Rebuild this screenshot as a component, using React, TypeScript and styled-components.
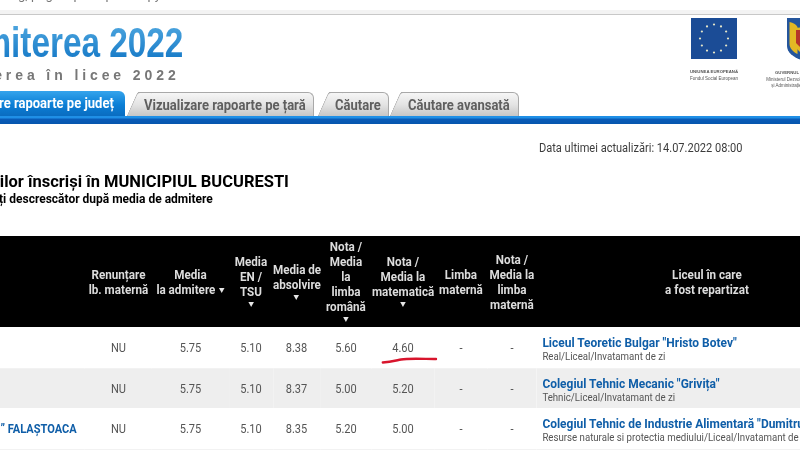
import React from "react";
import styled, { createGlobalStyle } from "styled-components";

const Global = createGlobalStyle`
  html, body { margin: 0; padding: 0; background: #fff; overflow: hidden; width: 800px; height: 450px; }
  body { font-family: Roboto, "DejaVu Sans", sans-serif; }
`;

const SHIFT = 200;
const SQUEEZE = 0.92;

const Viewport = styled.div`
  width: 800px;
  height: 450px;
  overflow: hidden;
  filter: blur(0.35px);
`;
const Page = styled.div`
  width: 1200px;
  margin-left: -${SHIFT}px;
`;
const BrowserText = styled.div`
  height: 3px;
  overflow: hidden;
  font-size: 13px;
  line-height: 13px;
  color: #777;
  padding-left: 218px;
`;
const BrowserLine = styled.div`
  margin-top: -12px;
  white-space: nowrap;
`;
const TopBand = styled.div`
  margin-top: 7px;
  height: 4px;
  background: #f3f3f3;
  border-bottom: 1px solid #c8c8c8;
`;
const Masthead = styled.header`
  height: 76px;
  position: relative;
`;
const Brand = styled.div`
  padding: 4px 0 0 137px;
`;
const BrandTitle = styled.div`
  font-family: "Liberation Sans", sans-serif;
  font-weight: 700;
  font-size: 43px;
  line-height: 46px;
  width: max-content;
  transform: scaleX(0.775);
  transform-origin: left top;
  background: linear-gradient(#55ace2, #0f74c4);
  -webkit-background-clip: text;
  background-clip: text;
  color: transparent;
`;
const BrandSub = styled.div`
  font-family: "Liberation Sans", sans-serif;
  font-weight: 700;
  font-size: 14px;
  line-height: 16px;
  margin-top: 2px;
  margin-left: -4px;
  letter-spacing: 3.9px;
  color: #777;
  white-space: nowrap;
  padding-left: 2px;
`;
const Partners = styled.div`
  display: flex;
  gap: 13px;
  padding: 3px 0 0 884px;
  position: absolute;
  left: 0;
  top: 0;
`;
const Partner = styled.div`
  width: 60px;
  display: flex;
  flex-direction: column;
  align-items: center;
  font-family: "Liberation Sans", sans-serif;
  font-size: 4.5px;
  line-height: 6.5px;
  color: #555;
  white-space: nowrap;
  text-align: center;
  b { font-size: 4.3px; }
`;
const PartnerLogo = styled.svg<{ $offset?: number }>`
  display: block;
  margin-bottom: 10px;
  margin-left: ${(p) => p.$offset ?? 0}px;
`;
const TabsRow = styled.nav`
  display: flex;
  align-items: flex-end;
  height: 25px;
  padding-left: 90px;
`;
const ActiveTab = styled.div`
  height: 25px;
  width: 235px;
  box-sizing: border-box;
  padding-right: 11px;
  text-align: right;
  line-height: 25px;
  font-size: 14px;
  font-weight: 700;
  color: #fff;
  white-space: nowrap;
  border-radius: 0 6px 0 0;
  background: linear-gradient(#35a4ec, #0b7fd6 55%, #0a6cc0);
  > span { display: inline-block; transform: scaleX(0.93); transform-origin: right center; }
`;
const Tab = styled.div<{ $w: number; $ml: number; $pl: number }>`
  position: relative;
  width: ${(p) => p.$w}px;
  margin-left: ${(p) => p.$ml}px;
  padding-left: ${(p) => p.$pl}px;
  box-sizing: border-box;
  height: 24px;
  line-height: 24px;
  font-size: 14px;
  font-weight: 700;
  color: #5f5f5f;
  white-space: nowrap;
  border: 1px solid #a9a9a9;
  border-bottom: none;
  border-left: none;
  border-radius: 0 6px 0 0;
  background: linear-gradient(#f6f6f6, #e4e4e4 50%, #c6c6c6);
  &::before {
    content: "";
    position: absolute;
    left: -6px;
    top: -1px;
    bottom: 0;
    width: 14px;
    transform: skewX(-24deg);
    border-left: 1px solid #a9a9a9;
    border-top: 1px solid #a9a9a9;
    background: linear-gradient(#f6f6f6, #e4e4e4 50%, #c6c6c6);
    border-radius: 3px 0 0 0;
    z-index: 0;
  }
  > span {
    position: relative;
    z-index: 1;
    display: inline-block;
    transform: scaleX(0.93);
    transform-origin: left center;
  }
`;
const BlueBar = styled.div`
  height: 8px;
  background: linear-gradient(#1f8fe6 0, #1f8fe6 2px, #0a5cb8 3px, #0656ae 100%);
`;
const Updated = styled.div`
  margin: 16px 0 0 739px;
  font-size: 12px;
  line-height: 16px;
  color: #3c3c3c;
  white-space: nowrap;
  width: max-content;
  transform: scaleX(${SQUEEZE});
  transform-origin: left top;
`;
const HeadingMain = styled.div`
  margin-top: 17px;
  padding-left: 48px;
  white-space: nowrap;
  color: #000;
  font-weight: 700;
  font-size: 16.5px;
  line-height: 18px;
`;
const HeadingSub = styled.div`
  padding-left: 107px;
  white-space: nowrap;
  color: #000;
  font-weight: 700;
  font-size: 12px;
  line-height: 16px;
`;
const Table = styled.table`
  margin-top: 29px;
  margin-left: ${SHIFT}px;
  border-collapse: collapse;
  table-layout: fixed;
  width: ${878 / SQUEEZE}px;
  transform: scaleX(${SQUEEZE});
  transform-origin: left top;
`;
const HeadRow = styled.tr`
  height: 91px;
  background: #000;
`;
const Th = styled.th`
  padding: 0;
  font-size: 12.7px;
  line-height: 15px;
  font-weight: 700;
  color: #dcdcdc;
  background: #000;
  box-shadow: 1px 0 0 #000;
  text-align: center;
  vertical-align: middle;
  white-space: nowrap;
`;
const Arrow = styled.span<{ $inline?: boolean }>`
  display: ${(p) => (p.$inline ? "inline-block" : "block")};
  width: 0;
  height: 0;
  margin: ${(p) => (p.$inline ? "0 0 1px 4px" : "3px auto 2px")};
  border-left: 3.5px solid transparent;
  border-right: 3.5px solid transparent;
  border-top: 5px solid #e6e6e6;
`;
const Row = styled.tr<{ $alt?: boolean }>`
  height: ${(p) => (p.$alt ? 40 : 41)}px;
  border-bottom: ${(p) => (p.$alt ? "none" : "1px solid #f2f2f2")};
  > td {
    background: ${(p) => (p.$alt ? "#eeeeee" : "#fff")};
    box-shadow: 1px 0 0 ${(p) => (p.$alt ? "#eeeeee" : "#fff")};
  }
`;
const Td = styled.td`
  padding: 2px 0 0;
  box-sizing: border-box;
  font-size: 12px;
  color: #555;
  text-align: center;
  position: relative;
  white-space: nowrap;
`;
const NameTd = styled(Td)`
  text-align: right;
  padding-right: 9px;
  color: #0f5ea8;
  font-weight: 700;
`;
const SchoolTd = styled(Td)`
  text-align: left;
  padding: 3px 0 0 7px;
  overflow: hidden;
`;
const SchoolName = styled.div`
  font-weight: 700;
  color: #0f5ea8;
  font-size: 13px;
  line-height: 15px;
`;
const SchoolKind = styled.div`
  font-size: 10.5px;
  line-height: 13px;
  color: #555;
`;
const Scribble = styled.svg`
  position: absolute;
  left: 8px;
  top: 28px;
  z-index: 1;
  pointer-events: none;
`;

const stars = Array.from({ length: 12 }, (_, i) => {
  const a = (i * Math.PI) / 6;
  return { x: 23 + 14 * Math.sin(a), y: 20.5 - 14 * Math.cos(a) };
});

const rows = [
  { name: "", v: ["5.75", "5.10", "8.38", "5.60", "4.60"], s: 'Liceul Teoretic Bulgar "Hristo Botev"', k: "Real/Liceal/Invatamant de zi", mark: true },
  { name: "", v: ["5.75", "5.10", "8.37", "5.00", "5.20"], s: 'Colegiul Tehnic Mecanic "Grivița"', k: "Tehnic/Liceal/Invatamant de zi", alt: true },
  { name: "” FALAȘTOACA", v: ["5.75", "5.10", "8.35", "5.20", "5.00"], s: 'Colegiul Tehnic de Industrie Alimentară "Dumitru Moțoc"', k: "Resurse naturale si protectia mediului/Liceal/Invatamant de zi" },
];

const widths = [85, 67, 77, 44, 47, 52, 62, 54, 48, 342];

export default function App() {
  return (
    <Viewport>
      <Global />
      <Page>
        <BrowserText>
          <BrowserLine>g, pagina principală copy</BrowserLine>
        </BrowserText>
        <TopBand />
        <Masthead>
          <Brand>
            <BrandTitle>Admiterea 2022</BrandTitle>
            <BrandSub>Admiterea în licee 2022</BrandSub>
          </Brand>
          <Partners>
            <Partner>
              <PartnerLogo width="46" height="41" viewBox="0 0 46 41">
                <rect width="46" height="41" fill="#1b4c96" />
                {stars.map((s, i) => (
                  <circle key={i} cx={s.x} cy={s.y} r="1.1" fill="#e6e6c8" />
                ))}
              </PartnerLogo>
              <b>UNIUNEA EUROPEANĂ</b>
              <span>Fondul Social European</span>
            </Partner>
            <Partner>
              <PartnerLogo $offset={28} width="30" height="42" viewBox="0 0 30 42">
                <path d="M1 0h28v28c0 7-7 11-14 14C8 39 1 35 1 28z" fill="#24559c" />
                <path d="M3.500 4c4 1 6 2 8 5v27C7 34 3.500 30 3.500 26z" fill="#e3b824" />
                <path d="M9 10l10-1 4 6v12l-8 8-6-6z" fill="#e3b824" />
                <path d="M10 12h10v13l-5 5-5-5z" fill="#b5342a" />
              </PartnerLogo>
              <b>GUVERNUL</b>
              <span>Ministerul Dezvoltării</span>
              <span>și Administrației</span>
            </Partner>
          </Partners>
        </Masthead>
        <TabsRow>
          <ActiveTab><span>Vizualizare rapoarte pe județ</span></ActiveTab>
          <Tab $w={176} $ml={13} $pl={6}><span>Vizualizare rapoarte pe țară</span></Tab>
          <Tab $w={60} $ml={15} $pl={6}><span>Căutare</span></Tab>
          <Tab $w={118} $ml={12} $pl={7}><span>Căutare avansată</span></Tab>
        </TabsRow>
        <BlueBar />
        <Updated>Data ultimei actualizări: 14.07.2022 08:00</Updated>
        <HeadingMain>Rezultatele candidaților înscriși în MUNICIPIUL BUCURESTI</HeadingMain>
        <HeadingSub>Candidați ordonați descrescător după media de admitere</HeadingSub>
        <Table>
          <colgroup>
            {widths.map((w, i) => (
              <col key={i} style={{ width: w / SQUEEZE }} />
            ))}
          </colgroup>
          <thead>
            <HeadRow>
              <Th />
              <Th>Renunțare<br />lb. maternă</Th>
              <Th>Media<br />la admitere<Arrow $inline /></Th>
              <Th>Media<br />EN /<br />TSU<Arrow /></Th>
              <Th>Media de<br />absolvire<Arrow /></Th>
              <Th>Nota /<br />Media<br />la<br />limba<br />română<Arrow /></Th>
              <Th>Nota /<br />Media la<br />matematică<Arrow /></Th>
              <Th>Limba<br />maternă</Th>
              <Th>Nota /<br />Media la<br />limba<br />maternă</Th>
              <Th>Liceul în care<br />a fost repartizat</Th>
            </HeadRow>
          </thead>
          <tbody>
            {rows.map((r, i) => (
              <Row key={i} $alt={r.alt}>
                <NameTd>{r.name}</NameTd>
                <Td>NU</Td>
                {r.v.map((x, j) => (
                  <Td key={j}>
                    {x}
                    {r.mark && j === 4 && (
                      <Scribble width="66" height="10" viewBox="0 0 66 10">
                        <path d="M4 7.500C12 7 16 6 24 4.500S50 4 62 4" fill="none" stroke="#d8142c" strokeWidth="2.4" strokeLinecap="round" />
                      </Scribble>
                    )}
                  </Td>
                ))}
                <Td>-</Td>
                <Td>-</Td>
                <SchoolTd>
                  <SchoolName>{r.s}</SchoolName>
                  <SchoolKind>{r.k}</SchoolKind>
                </SchoolTd>
              </Row>
            ))}
          </tbody>
        </Table>
      </Page>
    </Viewport>
  );
}
